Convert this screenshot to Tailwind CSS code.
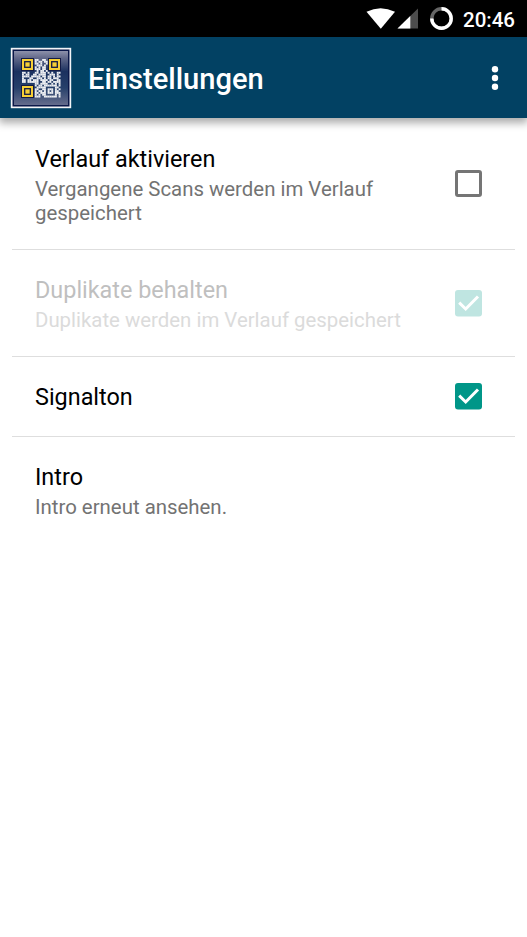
<!DOCTYPE html>
<html lang="de">
<head>
<meta charset="utf-8">
<title>Einstellungen</title>
<script src="https://cdn.jsdelivr.net/npm/@tailwindcss/browser@4"></script>
</head>
<body class="w-[527px] h-[937px] overflow-hidden bg-white font-[Roboto,sans-serif] flex flex-col">
<div class="h-[37px] shrink-0 bg-black flex items-center justify-end pr-3">
  <svg class="w-[92px] h-[37px] shrink-0" viewBox="364 0 92 37">
    <path d="M366.500 11.800Q380.500 4.500 395 11.800L380.800 28.800Z" fill="#fff"/>
    <path d="M418 8.500V28.500H397.500Z" fill="#4d4d4d"/>
    <path d="M410.300 16V28.500H397.500Z" fill="#fff"/>
    <circle cx="441.500" cy="18.500" r="9.700" fill="none" stroke="#666" stroke-width="3.400"/>
    <path d="M441.500 8.800A9.700 9.700 0 1 1 431.800 18.500" fill="none" stroke="#fff" stroke-width="3.400"/>
  </svg>
  <span class="ml-[7px] mt-[2px] w-[52px] text-[20.5px] leading-6 font-medium text-white whitespace-nowrap">20:46</span>
</div>
<header class="relative h-[81px] shrink-0 bg-[#024163] flex items-center shadow-[0_4px_8px_1px_rgba(0,0,0,0.33)]">
  <svg class="ml-[10px] size-[62px] shrink-0" viewBox="0 0 62 62">
    <defs><linearGradient id="g" x1="0" y1="0" x2="0" y2="1"><stop offset="0" stop-color="#8d91aa"/><stop offset=".13" stop-color="#62698a"/><stop offset=".38" stop-color="#1b315f"/><stop offset=".68" stop-color="#26406a"/><stop offset="1" stop-color="#656c8c"/></linearGradient></defs>
    <rect x=".8" y=".8" width="60.400" height="60.400" fill="#f2f4f7"/>
    <rect x="2.500" y="2.500" width="57" height="57" fill="#0a1748"/>
    <rect x="4" y="4" width="54" height="54" fill="url(#g)"/>
    <g id="qr" transform="translate(12 12) scale(1.83)"></g>
    <g id="finders" fill="#f6cf35" stroke="#141b45">
      <g transform="translate(11.500 11.500)"><rect width="12" height="12" stroke-width="1"/><rect x="3.200" y="3.200" width="5.600" height="5.600" stroke-width="1.300"/></g>
      <g transform="translate(38.500 11.500)"><rect width="12" height="12" stroke-width="1"/><rect x="3.200" y="3.200" width="5.600" height="5.600" stroke-width="1.300"/></g>
      <g transform="translate(11.500 38.500)"><rect width="12" height="12" stroke-width="1"/><rect x="3.200" y="3.200" width="5.600" height="5.600" stroke-width="1.300"/></g>
    </g>
  </svg>
  <h1 class="ml-4 mt-[2px] text-[29.1px] leading-9 font-medium text-white">Einstellungen</h1>
  <svg class="ml-auto mr-[27px] w-[10px] h-[28px]" viewBox="0 0 10 28" fill="#fff"><circle cx="5" cy="5.300" r="3.200"/><circle cx="5" cy="14" r="3.200"/><circle cx="5" cy="22.700" r="3.200"/></svg>
</header>
<main class="px-3 pt-px">
  <section class="flex items-center justify-between pl-[23px] pr-[33px] pt-[25px] pb-6">
    <div class="w-[370px]">
      <h2 class="text-[23.4px] leading-[30px] text-black">Verlauf aktivieren</h2>
      <p class="mt-[3px] text-[20.4px] leading-6 text-[#737373]">Vergangene Scans werden im Verlauf<br>gespeichert</p>
    </div>
    <div class="mb-[2px] size-[27px] rounded-[3px] border-3 border-[#757575]"></div>
  </section>
  <hr class="border-[#dedede]">
  <section class="flex items-center justify-between pl-[23px] pr-[33px] pt-[25px] pb-6">
    <div class="w-[380px]">
      <h2 class="text-[23.4px] leading-[30px] text-[#bfbfbf]">Duplikate behalten</h2>
      <p class="mt-[3px] text-[20.4px] leading-6 text-[#dbdbdb] whitespace-nowrap">Duplikate werden im Verlauf gespeichert</p>
    </div>
    <svg class="size-[27px]" viewBox="0 0 27 27"><rect width="27" height="26.500" rx="3" fill="#bfe5e1"/><path d="M4.200 12.700L10.700 19L23 6.500" fill="none" stroke="#fff" stroke-width="3"/></svg>
  </section>
  <hr class="border-[#dedede]">
  <section class="flex items-center justify-between pl-[23px] pr-[33px] pt-[25px] pb-6">
    <h2 class="text-[23.4px] leading-[30px] text-black">Signalton</h2>
    <svg class="mb-[2px] size-[27px]" viewBox="0 0 27 27"><rect width="27" height="26.500" rx="3" fill="#009688"/><path d="M4.200 12.700L10.700 19L23 6.500" fill="none" stroke="#fff" stroke-width="3"/></svg>
  </section>
  <hr class="border-[#dedede]">
  <section class="pl-[23px] pt-[25px] pb-6">
    <h2 class="text-[23.4px] leading-[30px] text-black">Intro</h2>
    <p class="mt-[3px] text-[20.4px] leading-6 text-[#737373]">Intro erneut ansehen.</p>
  </section>
</main>
<script>
// # = light data module; the finder patterns are drawn separately
const rows = [
".......##..##........",
".......#.##.##.......",
".......##.#..#.......",
"........###.#........",
".......#.#.##........",
".......###.##........",
"........#.##.#.......",
"##.#...##.###.#.#..##",
"#.##..##.####..###.#.",
"####.#####.##.##.#.##",
"#...##..###.#.##.###.",
"##.##.###.####.##..##",
"##.######..##.##.####",
".......##.####..#.#.#",
".......#.##.#######.#",
"........#####.....##.",
".......##..##.###.#.#",
".......#.##.#.#.#.##.",
".......##.###.###.###",
".......#.#.##.....#.#",
".......###..#######.#"];
let h = '';
rows.forEach((r, y) => [...r].forEach((c, x) => {
  if (c !== '.') h += `<rect x="${x}" y="${y}" width="1.050" height="1.050" fill="#eceef2"/>`;
}));
document.getElementById('qr').innerHTML = h;
</script>
</body>
</html>
